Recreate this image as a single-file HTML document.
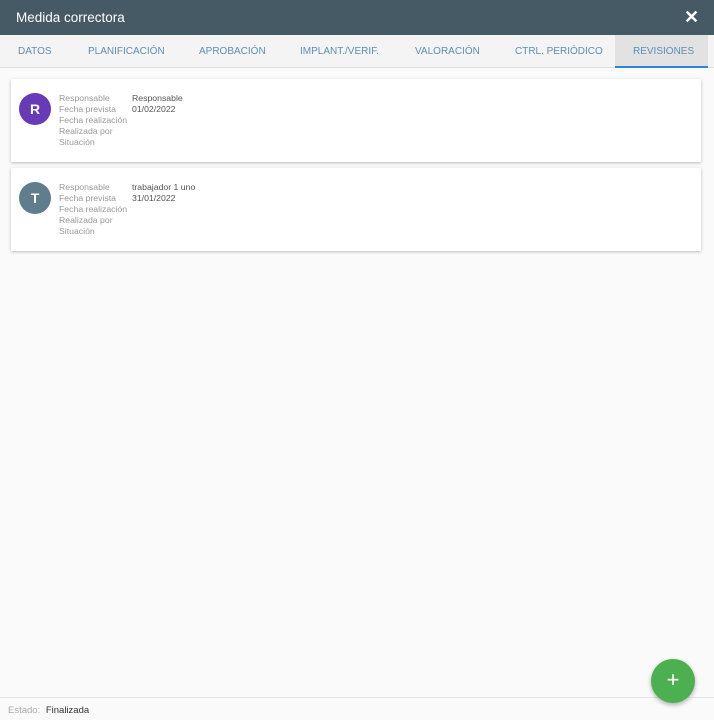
<!DOCTYPE html>
<html><head><style>
*{box-sizing:border-box;margin:0;padding:0}
body{width:714px;height:720px;overflow:hidden;background:#fafafa;font-family:"Liberation Sans",sans-serif;position:relative}
.hdr{position:absolute;left:0;top:0;width:714px;height:35px;background:#465a65;color:#fff;font-size:13.5px}
.hdr .t{position:absolute;left:16px;top:10px}
.hdr .x{position:absolute;left:684px;top:7px;font-size:18px;font-weight:bold}
.tabs{position:absolute;top:35px;left:0;width:714px;height:33px;background:#f4f4f4;border-bottom:1px solid #e0e0e0}
.tab{position:absolute;top:11px;font-size:10px;color:#5b8fb5}
.act{position:absolute;left:615px;top:0;width:93px;height:33px;background:#e2e2e2;border-bottom:2px solid #2f86d0}
.card{position:absolute;left:11px;width:690px;background:#fff;box-shadow:0 1px 3px rgba(0,0,0,.25)}
.av{position:absolute;left:8px;top:14px;width:32px;height:32px;border-radius:50%;color:#fff;font-size:14px;font-weight:bold;text-align:center;line-height:32px}
.lb{position:absolute;left:48px;top:14px;font-size:8.7px;color:#999;line-height:11px}
.vl{position:absolute;left:121px;top:14px;font-size:8.7px;color:#555;line-height:11px}
.foot{position:absolute;left:0;top:697px;width:714px;height:23px;border-top:1px solid #e6e6e6;background:#fafafa;font-size:9.5px;padding:7px 8px}
.fab{position:absolute;left:651px;top:659px;width:44px;height:44px;border-radius:50%;background:#4caf50;color:#fff;font-size:22px;text-align:center;line-height:42px;box-shadow:0 2px 5px rgba(0,0,0,.3)}
</style></head><body>
<div class="hdr"><span class="t">Medida correctora</span><span class="x">✕</span></div>
<div class="tabs"><div class="act"></div>
<span class="tab" style="left:18px">DATOS</span>
<span class="tab" style="left:88px">PLANIFICACIÓN</span>
<span class="tab" style="left:199px">APROBACIÓN</span>
<span class="tab" style="left:300px">IMPLANT./VERIF.</span>
<span class="tab" style="left:415px">VALORACIÓN</span>
<span class="tab" style="left:515px">CTRL. PERIÓDICO</span>
<span class="tab" style="left:633px">REVISIONES</span>
</div>
<div class="card" style="top:79px;height:83px"><div class="av" style="background:#673ab7">R</div>
<div class="lb">Responsable<br>Fecha prevista<br>Fecha realización<br>Realizada por<br>Situación</div>
<div class="vl">Responsable<br>01/02/2022</div></div>
<div class="card" style="top:168px;height:83px"><div class="av" style="background:#5f7d8c">T</div>
<div class="lb">Responsable<br>Fecha prevista<br>Fecha realización<br>Realizada por<br>Situación</div>
<div class="vl">trabajador 1 uno<br>31/01/2022</div></div>
<div class="foot"><span style="color:#aaa">Estado:</span> <span style="color:#333;margin-left:3px">Finalizada</span></div>
<div class="fab">+</div>
</body></html>
